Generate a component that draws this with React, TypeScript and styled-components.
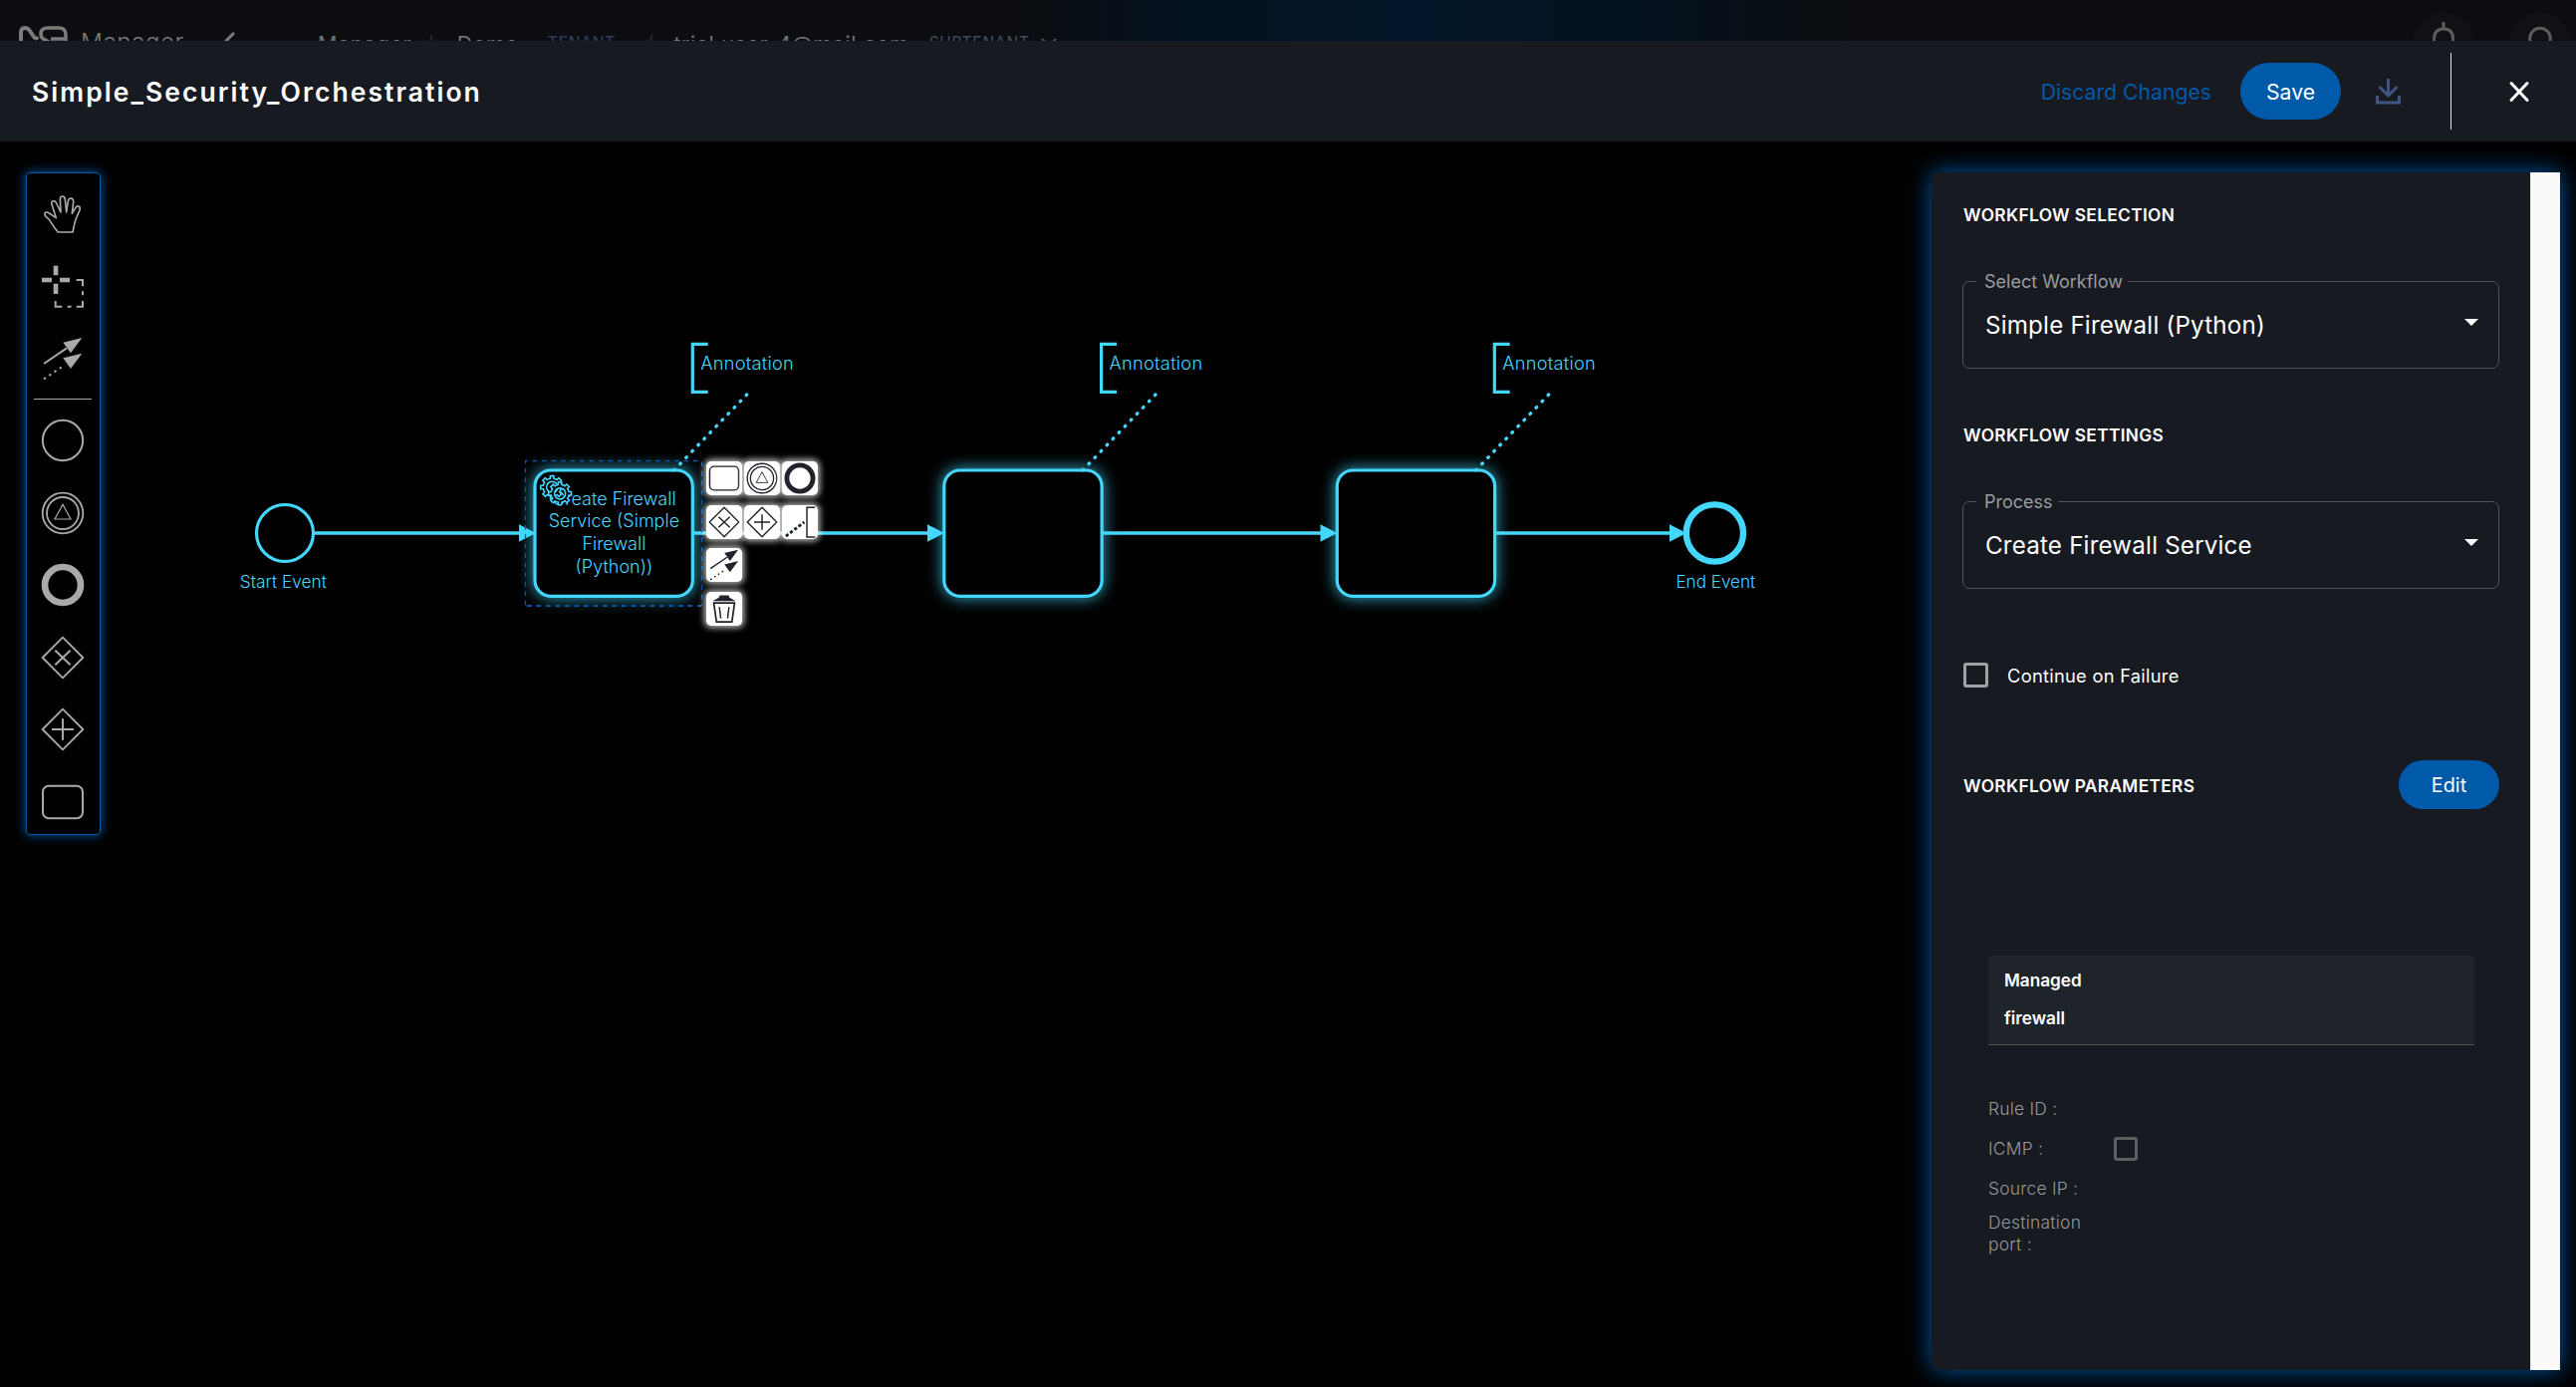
import React from 'react';
import styled, { createGlobalStyle } from 'styled-components';

const CYAN = '#44d7fe';
const BLUE = '#0059a9';
const PANEL = '#171a21';
const GREY = '#a9a9a9';

const GlobalStyle = createGlobalStyle`
  *, *::before, *::after { box-sizing: border-box; }
  body {
    margin: 0;
    background: #000;
    color: #fff;
    font-family: Inter, Roboto, sans-serif;
    overflow: hidden;
  }
  svg { display: block; }
`;

const Page = styled.div`
  display: flex;
  flex-direction: column;
  width: 2586px;
  height: 1392px;
  background: #000;
  overflow: hidden;
`;

/* ---------- dimmed application bar behind the dialog ---------- */

const AppBar = styled.div`
  flex: none;
  height: 41px;
  overflow: hidden;
  background: linear-gradient(90deg, #0b0d10 0, #0b0d10 1020px, #05121f 1180px, #021629 1420px, #05121f 1640px, #0b0d10 1860px);
`;

const AppBarInner = styled.div`
  display: flex;
  align-items: center;
  height: 86px;
  padding: 0 5px 0 18px;
  color: #7b7b7b;
`;

const Product = styled.span`
  width: 141px;
  margin-left: 12px;
  padding-bottom: 2px;
  font-size: 24.5px;
  font-weight: 300;
  line-height: 30px;
  letter-spacing: 0.35px;
`;

const Crumb = styled.span<{ $gap: number; $dim?: boolean }>`
  margin-left: ${(p) => p.$gap}px;
  padding-top: 1px;
  font-size: 21.5px;
  line-height: 24px;
  letter-spacing: 0.6px;
  white-space: nowrap;
  color: ${(p) => (p.$dim ? '#2b2d30' : '#737373')};
`;

const Tag = styled.span<{ $color: string; $gap: number }>`
  margin-left: ${(p) => p.$gap}px;
  font-size: 15.5px;
  font-weight: 500;
  line-height: 18px;
  letter-spacing: 0.7px;
  color: ${(p) => p.$color};
`;

const BarChevron = styled.svg`
  margin-left: 11px;
`;

const BarSpacer = styled.div`
  flex: 1;
`;

const RoundButton = styled.div`
  display: flex;
  justify-content: center;
  width: 62px;
  height: 62px;
  margin-left: 35px;
  padding-top: 10px;
  border-radius: 50%;
  background: #101115;
`;

/* ---------- dialog header ---------- */

const Header = styled.header`
  flex: none;
  display: flex;
  align-items: center;
  height: 101px;
  padding: 0 45px 0 32px;
  background: ${PANEL};
`;

const Title = styled.h1`
  flex: 1;
  margin: 0;
  font-size: 26.5px;
  font-weight: 600;
  line-height: 32px;
  letter-spacing: 2.05px;
`;

const LinkButton = styled.button`
  border: 0;
  padding: 0;
  background: none;
  color: ${BLUE};
  font: 400 21.2px/26px Inter, sans-serif;
`;

const PillButton = styled.button<{ $height: number; $size: number }>`
  width: 101px;
  height: ${(p) => p.$height}px;
  border: 0;
  border-radius: 999px;
  padding: 0;
  background: ${BLUE};
  color: #fff;
  font: 400 ${(p) => p.$size}px/26px Inter, sans-serif;
`;

const HeaderActions = styled.div`
  display: flex;
  align-items: center;

  ${PillButton} { margin: 0 32px 0 29px; }
`;

const Divider = styled.div`
  width: 1px;
  height: 77px;
  margin: 0 56px 0 47px;
  background: #e4e4e6;
`;

/* ---------- body ---------- */

const Body = styled.main`
  flex: 1;
  display: flex;
  align-items: flex-start;
  padding: 31px 16px 17px 26px;
`;

const Palette = styled.nav`
  flex: none;
  width: 75px;
  height: 665px;
  padding: 5px 1px 0 0;
  border: 1px solid ${BLUE};
  border-radius: 4px;
  box-shadow: 0 0 12px ${BLUE};
`;

const PaletteEntry = styled.div`
  display: flex;
  align-items: center;
  justify-content: center;
  height: 72.6px;
  color: ${GREY};
`;

const PaletteSeparator = styled.div`
  height: 1px;
  margin: 3px 7px 5px 7px;
  background: ${GREY};
`;

const Canvas = styled.section`
  position: relative;
  flex: none;
  width: 1838px;
  height: 1202px;
`;

const ContextPad = styled.div`
  position: absolute;
  left: 608px;
  top: 290px;
  display: grid;
  grid-template-columns: repeat(3, 36px);
  grid-auto-rows: 34px;
  column-gap: 2px;
  row-gap: 9.7px;
`;

const PadEntry = styled.div<{ $first?: boolean }>`
  display: flex;
  align-items: center;
  justify-content: center;
  ${(p) => (p.$first ? 'grid-column: 1;' : '')}
  border-radius: 5px;
  background: #fff;
  box-shadow: 0 0 6px 2px rgba(255, 255, 255, 0.75);
  color: #20232b;
`;

/* ---------- side panel ---------- */

const Panel = styled.aside`
  flex: none;
  display: flex;
  width: 631px;
  height: 1202px;
  border-radius: 8px 0 0 8px;
  background: ${PANEL};
  box-shadow: 0 0 24px ${BLUE};
`;

const PanelContent = styled.div`
  flex: 1;
  padding: 31px 31px 0 32px;
`;

const ScrollTrack = styled.div`
  width: 30px;
  border-left: 1px solid #e8e8e8;
  border-right: 1px solid #ededed;
  background: #fafafa;
`;

const SectionTitle = styled.h2<{ $gap?: number }>`
  margin: ${(p) => p.$gap || 0}px 0 0;
  font-size: 17.3px;
  font-weight: 600;
  line-height: 24px;
  letter-spacing: 0.36px;
`;

const Select = styled.div`
  position: relative;
  display: flex;
  align-items: center;
  justify-content: space-between;
  height: 88px;
  margin: 54px 0 0 -1px;
  padding: 1px 20px 0 22px;
  border: 1px solid #515357;
  border-radius: 7px;
`;

const SelectLabel = styled.span`
  position: absolute;
  left: 13px;
  top: -11px;
  padding: 0 5px 0 8px;
  background: ${PANEL};
  color: #9b9c9e;
  font-size: 18px;
  line-height: 22px;
`;

const SelectValue = styled.span`
  font-size: 24.2px;
  line-height: 30px;
  letter-spacing: 0.18px;
`;

const Caret = styled.span`
  margin-top: -6px;
  border: 7px solid transparent;
  border-top-color: #fff;
  border-bottom: 0;
`;

const Checkbox = styled.span<{ $size: number; $color: string }>`
  width: ${(p) => p.$size}px;
  height: ${(p) => p.$size}px;
  border: 3px solid ${(p) => p.$color};
  border-radius: 3px;
`;

const CheckRow = styled.label`
  display: flex;
  align-items: center;
  gap: 19px;
  height: 25px;
  margin-top: 74px;
  font-size: 18.3px;
  letter-spacing: 0.28px;
`;

const ParamsHead = styled.div`
  display: flex;
  align-items: center;
  justify-content: space-between;
  height: 49px;
  margin-top: 73px;
`;

const ManagedBox = styled.div`
  width: 488px;
  margin: 147px 0 0 25px;
  padding: 6px 16px 7px;
  border-bottom: 1px solid #505252;
  background: #1f232a;
  font-size: 17.2px;
  font-weight: 600;
  line-height: 38px;
`;

const Params = styled.div`
  margin: 44px 0 0 25px;
  color: #97989a;
`;

const ParamRow = styled.div<{ $multi?: boolean }>`
  display: flex;
  align-items: center;
  min-height: 40px;
  padding-top: ${(p) => (p.$multi ? 3 : 0)}px;
`;

const ParamLabel = styled.span`
  width: 126px;
  padding-right: 20px;
  font-size: 17.4px;
  font-weight: 300;
  line-height: 22px;
  letter-spacing: 0.25px;
`;

/* ---------- icons ---------- */

type IconName = 'hand' | 'lasso' | 'connect' | 'start' | 'intermediate' | 'end' | 'xor' | 'parallel' | 'task' | 'annotation' | 'trash';

const shapes: Record<IconName, React.ReactNode> = {
  hand: (
    <path
      strokeWidth="5"
      strokeLinejoin="round"
      d="M-14 54H30L36 26Q39 14 44 4L51-12Q54-21 48-24Q41-26 37-17L28-2L32-37Q33-46 25-48Q18-48 16-40L11-6L7-44Q6-54-1-54Q-8-54-8-44L-6-6L-19-33Q-23-42-29-40Q-36-38-33-29L-20 11L-41-3Q-50-9-54-3Q-56 2-50 8Q-40 15-33 28Q-27 39-14 54Z"
    />
  ),
  lasso: (
    <g>
      <g strokeWidth="14">
        <path d="M-21-64V-35M-21-10V21M-63-21H-33M-9-21H21" />
      </g>
      <path strokeWidth="6" d="M41-21H60V-2M60 13V25M60 42V59H41M26 59H14M-2 59H-22V42" />
    </g>
  ),
  connect: (
    <g>
      <path strokeWidth="6" d="M-57 15L12-32" />
      <path strokeWidth="6" strokeDasharray="7 12" d="M-57 61L6 19" />
      <path fill="currentColor" stroke="none" d="M58-63L1-49L24-17ZM58-16L1-2L24 30Z" />
    </g>
  ),
  start: <circle r="60.5" strokeWidth="6" />,
  intermediate: (
    <g>
      <circle r="61" strokeWidth="5.5" />
      <circle r="48" strokeWidth="5.5" />
      <path strokeWidth="3.6" d="M0-26L24 18H-24Z" />
    </g>
  ),
  end: <circle r="54" strokeWidth="20" />,
  xor: (
    <g strokeLinejoin="round">
      <path strokeWidth="5.5" d="M0-61L61 0L0 61L-61 0Z" />
      <path strokeWidth="6" d="M-23-22L23 22M23-22L-23 22" />
    </g>
  ),
  parallel: (
    <g strokeLinejoin="round">
      <path strokeWidth="5.5" d="M0-61L61 0L0 61L-61 0Z" />
      <path strokeWidth="6" d="M-33 0H33M0-32V32" />
    </g>
  ),
  task: <rect x="-60" y="-49" width="120" height="98" rx="18" strokeWidth="6" />,
  annotation: (
    <g>
      <path strokeWidth="6" d="M63-61H29V62H63" />
      <path strokeWidth="12" strokeDasharray="13 9" d="M-58 58L18 0" />
    </g>
  ),
  trash: (
    <g>
      <path strokeWidth="7" d="M-43-24H43L32 54H-32Z" />
      <path strokeWidth="6" d="M-20-8L-14 40M20-8L14 40" />
      <path fill="currentColor" stroke="none" d="M-46-33L-22-46L-18-56H18L22-46L46-33V-32H-46Z" />
    </g>
  ),
};

function Icon({ name, size }: { name: IconName; size: number }) {
  return (
    <svg width={size} height={size} viewBox="-66 -66 132 132" fill="none" stroke="currentColor">
      {shapes[name]}
    </svg>
  );
}

/* ---------- diagram ---------- */

const DiagramText = styled.text<{ $size: number; $ls?: number }>`
  fill: ${CYAN};
  font-size: ${(p) => p.$size}px;
  font-weight: 300;
  letter-spacing: ${(p) => p.$ls || 0}px;
`;

const DiagramSvg = styled.svg`
  font-family: Inter, sans-serif;
  overflow: visible;
`;

const TaskRect = styled.rect`
  fill: #000;
  stroke: ${CYAN};
  stroke-width: 3.17px;
  filter: drop-shadow(0 0 8px rgba(68, 215, 254, 0.8));
`;

const GEAR =
  'v -1.71335 c 0.352326,-0.0705 0.703932,-0.17838 1.047628,-0.32133 0.344416,-0.14465 0.665822,-0.32133 0.966377,-0.52145 l 1.19431,1.18005 1.567487,-1.57688 -1.195028,-1.18014 c 0.403376,-0.61394 0.683079,-1.29908 0.825447,-2.01824 l 1.622133,-0.01 v -2.2196 l -1.636514,0.01 c -0.07333,-0.35153 -0.178319,-0.70024 -0.323564,-1.04372 -0.145244,-0.34406 -0.321407,-0.6644 -0.522735,-0.96217 l 1.131035,-1.13631 -1.583305,-1.56293 -1.129598,1.13589 c -0.614052,-0.40108 -1.302883,-0.68093 -2.022633,-0.82247 l 0.0093,-1.61852 h -2.241173 l 0.0042,1.63124 c -0.353763,0.0736 -0.705369,0.17977 -1.049785,0.32371 -0.344415,0.14437 -0.665102,0.32092 -0.9635006,0.52006 l -1.1698628,-1.15823 -1.5667691,1.5792 1.1684265,1.15669 c -0.4026573,0.61283 -0.68308,1.29797 -0.8247287,2.01713 l -1.6588041,0.003 v 2.22174 l 1.6724648,-0.006 c 0.073327,0.35077 0.1797598,0.70243 0.3242851,1.04472 0.1452428,0.34448 0.3214064,0.6644 0.5227339,0.96066 l -1.1993431,1.19723 1.5840256,1.56011 1.1964668,-1.19348 c 0.6140517,0.40346 1.3028827,0.68232 2.0233517,0.82331 l 7.19e-4,1.69892 h 2.226848 z m 0.221462,-3.9957 c -1.788948,0.7502 -3.8576,-0.0928 -4.6097055,-1.87438 -0.7521065,-1.78321 0.090598,-3.84627 1.8802645,-4.59604 1.78823,-0.74936 3.856881,0.0929 4.608987,1.87437 0.752106,1.78165 -0.0906,3.84612 -1.879546,4.59605 z';

function Gears() {
  return (
    <g transform="translate(537 471.9) scale(1.586)" fill="#000" stroke={CYAN} strokeWidth="1">
      <path d={`m 12,18 ${GEAR}`} />
      <path d={`m 17,22 ${GEAR}`} />
    </g>
  );
}

function Flow({ from, to }: { from: number; to: number }) {
  return (
    <g>
      <path d={`M${from} 535H${to - 8}`} stroke={CYAN} strokeWidth="3.5" />
      <path d={`M${to} 535L${to - 17} 526.2V543.8Z`} fill={CYAN} />
    </g>
  );
}

function Annotation({ x }: { x: number }) {
  return (
    <g>
      <path d={`M${x + 17} 345.3H${x + 1.6}V393.4H${x + 17}`} fill="none" stroke={CYAN} strokeWidth="3.17" />
      <DiagramText $size={18.2} $ls={0.28} x={x + 9.5} y={371.3}>
        Annotation
      </DiagramText>
      <path
        d={`M${x - 17} 471.8L${x + 56} 396`}
        stroke={CYAN}
        strokeWidth="3.4"
        strokeLinecap="round"
        strokeDasharray="0.8 7.9"
      />
    </g>
  );
}

const tasks = [537, 947.8, 1342.3];
const taskLines: [string, number][] = [
  ['Create Firewall', 507],
  ['Service (Simple', 529.4],
  ['Firewall', 552],
  ['(Python))', 575],
];

function Diagram() {
  return (
    <DiagramSvg width="1838" height="1202" viewBox="101 173 1838 1202">
      {tasks.map((x) => (
        <TaskRect key={x} x={x} y={472} width={158.3} height={126.4} rx={15.9} />
      ))}
      <circle cx="286" cy="535" r="28.5" fill="none" stroke={CYAN} strokeWidth="3.17" />
      <circle cx="1721.4" cy="535" r="28.6" fill="none" stroke={CYAN} strokeWidth="6.4" />
      <Flow from={315} to={538} />
      <Flow from={697} to={948} />
      <Flow from={1107} to={1342.5} />
      <Flow from={1501} to={1693} />
      <Annotation x={693.7} />
      <Annotation x={1104} />
      <Annotation x={1498.7} />
      <DiagramText $size={17.3} x={284.3} y={590.3} textAnchor="middle">
        Start Event
      </DiagramText>
      <DiagramText $size={17.1} x={1722.3} y={590.3} textAnchor="middle">
        End Event
      </DiagramText>
      {taskLines.map(([line, y]) => (
        <DiagramText key={line} $size={18} x={616.4} y={y} textAnchor="middle">
          {line}
        </DiagramText>
      ))}
      <Gears />
      <g fill="none" stroke={BLUE} strokeDasharray="4.75 4.75">
        <path d="M527.5 607.5V462.5H704.5V607.5" strokeWidth="1.3" />
        <path d="M529 608H704" strokeWidth="2" />
      </g>
    </DiagramSvg>
  );
}

const paletteTools: IconName[] = ['hand', 'lasso', 'connect'];
const paletteShapes: IconName[] = ['start', 'intermediate', 'end', 'xor', 'parallel', 'task'];
const padEntries: IconName[] = ['task', 'intermediate', 'end', 'xor', 'parallel', 'annotation', 'connect', 'trash'];

function SelectField({ label, value }: { label: string; value: string }) {
  return (
    <Select>
      <SelectLabel>{label}</SelectLabel>
      <SelectValue>{value}</SelectValue>
      <Caret />
    </Select>
  );
}

export default function App() {
  return (
    <Page>
      <GlobalStyle />
      <AppBar>
        <AppBarInner>
          <svg width="51" height="34" viewBox="0 0 51 34" fill="none" stroke="currentColor" strokeWidth="4">
            <path d="M3 33V7Q3 2 7 2Q10 2 12 5L16 11Q18 14 20 11" />
            <path d="M48 33V9Q48 2 41 2H30Q23 2 23 8Q23 13 29 15L36 19M33 13H48" strokeWidth="3.6" />
          </svg>
          <Product>Manager</Product>
          <svg width="14" height="22" viewBox="0 0 14 22" fill="none" stroke="currentColor" strokeWidth="3">
            <path d="M13 1L3 11L13 21" />
          </svg>
          <Crumb $gap={83}>Manager</Crumb>
          <Crumb $gap={14} $dim>/</Crumb>
          <Crumb $gap={23}>Demo</Crumb>
          <Tag $gap={29} $color="#2b3a5c">TENANT</Tag>
          <Crumb $gap={30} $dim>/</Crumb>
          <Crumb $gap={20}>trial.user_4@mail.com</Crumb>
          <Tag $gap={20} $color="#3d4657">SUBTENANT</Tag>
          <BarChevron width="16" height="10" viewBox="0 0 16 10" fill="none" stroke="#555" strokeWidth="2">
            <path d="M1 1L8 8L15 1" />
          </BarChevron>
          <BarSpacer />
          <RoundButton>
            <svg width="26" height="34" viewBox="0 0 26 34" fill="none" stroke="#5c5c5c" strokeWidth="3">
              <path d="M13 0V7M3.5 30V17Q3.5 7 13 7Q22.5 7 22.5 17V30" />
            </svg>
          </RoundButton>
          <RoundButton>
            <svg width="26" height="34" viewBox="0 0 26 34" fill="none" stroke="#5c5c5c" strokeWidth="3">
              <circle cx="13" cy="16.5" r="10.3" />
            </svg>
          </RoundButton>
        </AppBarInner>
      </AppBar>

      <Header>
        <Title>Simple_Security_Orchestration</Title>
        <HeaderActions>
          <LinkButton>Discard Changes</LinkButton>
          <PillButton $height={57} $size={21.2}>Save</PillButton>
          <svg width="31" height="26" viewBox="-3 0 31 26" fill="none" stroke="#3f5685" strokeWidth="3">
            <path d="M1.500 17V24H23.500V17M12.500 0V17M3.500 8L12.500 17L21.500 8" />
          </svg>
          <Divider />
          <svg width="24" height="24" viewBox="0 0 24 24" stroke="#fff" strokeWidth="3" strokeLinecap="round">
            <path d="M4 3.500L20 20.500M20 3.500L4 20.500" />
          </svg>
        </HeaderActions>
      </Header>

      <Body>
        <Palette>
          {paletteTools.map((name) => (
            <PaletteEntry key={name}>
              <Icon name={name} size={44} />
            </PaletteEntry>
          ))}
          <PaletteSeparator />
          {paletteShapes.map((name) => (
            <PaletteEntry key={name}>
              <Icon name={name} size={44} />
            </PaletteEntry>
          ))}
        </Palette>

        <Canvas>
          <Diagram />
          <ContextPad>
            {padEntries.map((name) => (
              <PadEntry key={name} $first={name === 'connect' || name === 'trash'}>
                <Icon name={name} size={32} />
              </PadEntry>
            ))}
          </ContextPad>
        </Canvas>

        <Panel>
          <PanelContent>
            <SectionTitle>WORKFLOW SELECTION</SectionTitle>
            <SelectField label="Select Workflow" value="Simple Firewall (Python)" />
            <SectionTitle $gap={55}>WORKFLOW SETTINGS</SectionTitle>
            <SelectField label="Process" value="Create Firewall Service" />
            <CheckRow>
              <Checkbox $size={25} $color="#a0a1a3" />
              Continue on Failure
            </CheckRow>
            <ParamsHead>
              <SectionTitle $gap={2}>WORKFLOW PARAMETERS</SectionTitle>
              <PillButton $height={49} $size={19.8}>Edit</PillButton>
            </ParamsHead>
            <ManagedBox>
              Managed
              <br />
              firewall
            </ManagedBox>
            <Params>
              <ParamRow>
                <ParamLabel>Rule ID :</ParamLabel>
              </ParamRow>
              <ParamRow>
                <ParamLabel>ICMP :</ParamLabel>
                <Checkbox $size={24} $color="#5c5e62" />
              </ParamRow>
              <ParamRow>
                <ParamLabel>Source IP :</ParamLabel>
              </ParamRow>
              <ParamRow $multi>
                <ParamLabel>Destination port :</ParamLabel>
              </ParamRow>
            </Params>
          </PanelContent>
          <ScrollTrack />
        </Panel>
      </Body>
    </Page>
  );
}
